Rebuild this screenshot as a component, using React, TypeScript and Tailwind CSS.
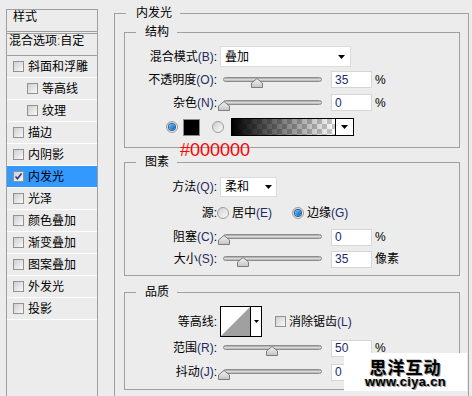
import React from "react";

// 左侧样式列表
const styles: { name: string; indent?: boolean; on?: boolean }[] = [
  { name: "斜面和浮雕" },
  { name: "等高线", indent: true },
  { name: "纹理", indent: true },
  { name: "描边" },
  { name: "内阴影" },
  { name: "内发光", on: true },
  { name: "光泽" },
  { name: "颜色叠加" },
  { name: "渐变叠加" },
  { name: "图案叠加" },
  { name: "外发光" },
  { name: "投影" },
];

function Check({ on }: { on?: boolean }) {
  return (
    <span className="relative block h-[11px] w-[11px] shrink-0 border border-[#929292] bg-gradient-to-br from-[#cfcfcf] to-[#f9f9f9]">
      {on && (
        <svg className="absolute left-0 top-0" width="9" height="9" viewBox="0 0 9 9">
          <path d="M1.5 4.5 L3.5 6.8 L7.5 1.5" fill="none" stroke="#2b3c8c" strokeWidth="1.6" />
        </svg>
      )}
    </span>
  );
}

function Radio({ on }: { on?: boolean }) {
  return (
    <span className="flex h-[12px] w-[12px] shrink-0 items-center justify-center rounded-full border border-[#9c9c9c] bg-gradient-to-br from-[#cfcfcf] to-[#fbfbfb]">
      {on && <span className="h-[6px] w-[6px] rounded-full bg-gradient-to-br from-[#6cc0ff] to-[#0b5aa6] ring-1 ring-[#1b64a8]" />}
    </span>
  );
}

function Arrow() {
  return (
    <svg width="7" height="4" viewBox="0 0 7 4">
      <path d="M0 0 H7 L3.5 4 Z" fill="#000" />
    </svg>
  );
}

function Label({ t, k }: { t: string; k?: string }) {
  return (
    <div className="w-[92px] shrink-0 text-right">
      {t}
      {k && <span className="text-[#1e2a66]">({k})</span>}:
    </div>
  );
}

function Slider({ pos }: { pos: number }) {
  return (
    <div className="relative ml-[3px] h-[18px] w-[104px] shrink-0">
      <div className="absolute left-[3px] top-[6px] h-[5px] w-[99px] rounded-full border border-[#8c8c8c] bg-gradient-to-b from-[#a4a4a4] via-[#d8d8d8] to-[#b4b4b4]" />
      <svg className="absolute top-[7px]" style={{ left: pos - 6 }} width="12" height="10" viewBox="0 0 12 10">
        <defs>
          <linearGradient id="thumbg" x1="0" y1="0" x2="0" y2="1">
            <stop offset="0" stopColor="#f4f4f4" />
            <stop offset="1" stopColor="#c4c4c4" />
          </linearGradient>
        </defs>
        <path d="M6 0.5 L11.5 5 V9.5 H0.5 V5 Z" fill="url(#thumbg)" stroke="#7c7c7c" />
      </svg>
    </div>
  );
}

function Num({ v, unit }: { v: string; unit: string }) {
  return (
    <>
      <div className="ml-[7px] flex h-[17px] w-[41px] shrink-0 items-center border border-[#d6d6d6] bg-white pl-[3px] text-[#1e2a66]">
        {v}
      </div>
      <span className="ml-[3px]">{unit}</span>
    </>
  );
}

export default function App() {
  return (
    <div className="relative flex h-[396px] w-[472px] overflow-hidden bg-[#ececec] font-['Liberation_Sans','Noto_Sans_CJK_SC',sans-serif] text-[12px] text-black">
      {/* 左侧列表 */}
      <div className="ml-[6px] mt-[9px] h-[400px] w-[92px] shrink-0 border border-[#a0a0a0]">
        <div className="h-[22px] border-b border-[#a0a0a0] pl-[6px] leading-[15px]">样式</div>
        <div className="mt-[1px] h-[23px] overflow-hidden whitespace-nowrap border-y border-[#a0a0a0] pl-[2px] leading-[15px]">
          混合选项<span className="text-[#8a5a10]">:</span>自定
        </div>
        {styles.map((s) => (
          <div
            key={s.name}
            className={`flex h-[22px] items-center gap-[4px] border-b border-white ${s.indent ? "pl-[20px]" : "pl-[6px]"} ${s.on ? "bg-[#3399ff]" : ""}`}
          >
            <Check on={s.on} />
            <span>{s.name}</span>
          </div>
        ))}
      </div>

      {/* 右侧 */}
      <div className="ml-[16px] w-[355px] shrink-0">
        <fieldset className="mt-[5px] h-[420px] border border-[#a0a0a0] pl-[9px] pr-[8px]">
          <legend className="ml-[2px] pl-[10px] pr-[8px] leading-[16px]">内发光</legend>

          <fieldset className="mt-[3px] border border-[#a0a0a0] pb-[7px] pt-[5px]">
            <legend className="ml-[11px] pl-[9px] pr-[8px] leading-[16px]">结构</legend>
            <div className="flex h-[23px] items-center">
              <Label t="混合模式" k="B" />
              <div className="ml-[3px] flex h-[21px] w-[131px] items-center justify-between border border-[#dcdcdc] bg-white pl-[4px] pr-[5px]">
                <span>叠加</span>
                <Arrow />
              </div>
            </div>
            <div className="flex h-[23px] items-center">
              <Label t="不透明度" k="O" />
              <Slider pos={37} />
              <Num v="35" unit="%" />
            </div>
            <div className="flex h-[23px] items-center">
              <Label t="杂色" k="N" />
              <Slider pos={4} />
              <Num v="0" unit="%" />
            </div>
            <div className="flex h-[26px] items-center pl-[41px]">
              <Radio on />
              <div className="ml-[5px] h-[17px] w-[17px] border border-[#8a8a8a] bg-black" />
              <div className="ml-[12px]">
                <Radio />
              </div>
              <div className="ml-[7px] flex h-[18px] w-[123px] border border-black">
                <div className="flex-1 bg-[linear-gradient(to_right,#000,rgba(0,0,0,0)),repeating-conic-gradient(#c9c9c9_0_25%,#fff_0_50%)] bg-[length:100%_100%,10px_10px]" />
                <div className="flex w-[18px] items-center justify-center border-l border-black bg-white">
                  <Arrow />
                </div>
              </div>
            </div>
          </fieldset>

          <fieldset className="mt-[6px] border border-[#a0a0a0] pb-[5px] pt-[6px]">
            <legend className="ml-[11px] pl-[9px] pr-[8px] leading-[16px]">图素</legend>
            <div className="flex h-[22px] items-center">
              <Label t="方法" k="Q" />
              <div className="ml-[3px] flex h-[20px] w-[57px] items-center justify-between border border-[#dcdcdc] bg-white pl-[4px] pr-[4px]">
                <span>柔和</span>
                <Arrow />
              </div>
            </div>
            <div className="mt-[4px] flex h-[22px] items-center">
              <Label t="源" />
              <Radio />
              <span className="ml-[3px]">
                居中<span className="text-[#1e2a66]">(E)</span>
              </span>
              <div className="ml-[20px]">
                <Radio on />
              </div>
              <span className="ml-[3px]">
                边缘<span className="text-[#1e2a66]">(G)</span>
              </span>
            </div>
            <div className="mt-[2px] flex h-[22px] items-center">
              <Label t="阻塞" k="C" />
              <Slider pos={4} />
              <Num v="0" unit="%" />
            </div>
            <div className="flex h-[22px] items-center">
              <Label t="大小" k="S" />
              <Slider pos={23} />
              <Num v="35" unit="像素" />
            </div>
          </fieldset>

          <fieldset className="mt-[8px] border border-[#a0a0a0] pb-[6px] pt-[6px]">
            <legend className="ml-[11px] pl-[9px] pr-[8px] leading-[16px]">品质</legend>
            <div className="flex h-[31px] items-center">
              <Label t="等高线" />
              <div className="ml-[3px] flex h-[31px] w-[42px] border border-black bg-white">
                <svg width="29" height="29" viewBox="0 0 29 29">
                  <polygon points="0,29 29,0 29,29" fill="#a0a0a0" />
                </svg>
                <div className="flex flex-1 items-center justify-center border-l border-black">
                  <svg width="5" height="3" viewBox="0 0 5 3">
                    <path d="M0 0 H5 L2.5 3 Z" fill="#000" />
                  </svg>
                </div>
              </div>
              <div className="ml-[13px]">
                <Check />
              </div>
              <span className="ml-[3px]">
                消除锯齿<span className="text-[#1e2a66]">(L)</span>
              </span>
            </div>
            <div className="flex h-[22px] items-center">
              <Label t="范围" k="R" />
              <Slider pos={52} />
              <Num v="50" unit="%" />
            </div>
            <div className="mt-[2px] flex h-[22px] items-center">
              <Label t="抖动" k="J" />
              <Slider pos={4} />
              <Num v="0" unit="%" />
            </div>
          </fieldset>
        </fieldset>
      </div>

      {/* 标注 */}
      <div className="absolute left-[180px] top-[141px] font-['Liberation_Sans',sans-serif] text-[18px] leading-[18px] text-[#ff0000]">
        #000000
      </div>

      {/* 水印 */}
      <div className="absolute left-[344px] top-[353px] flex h-[38px] w-[123px] flex-col items-center bg-white pt-[4px]">
        <div className="font-['Noto_Sans_CJK_SC',sans-serif] text-[17px] font-bold leading-[19px] tracking-[1px] [text-shadow:1px_1px_0_#9a9a9a,-1px_-1px_0_#d0d0d0]">
          思洋互动
        </div>
        <div className="font-['Liberation_Sans',sans-serif] text-[13px] font-bold leading-[12px] tracking-[0.3px] [text-shadow:1px_1px_0_#9a9a9a,-1px_0_0_#c8c8c8]">
          www.ciya.cn
        </div>
      </div>
    </div>
  );
}
